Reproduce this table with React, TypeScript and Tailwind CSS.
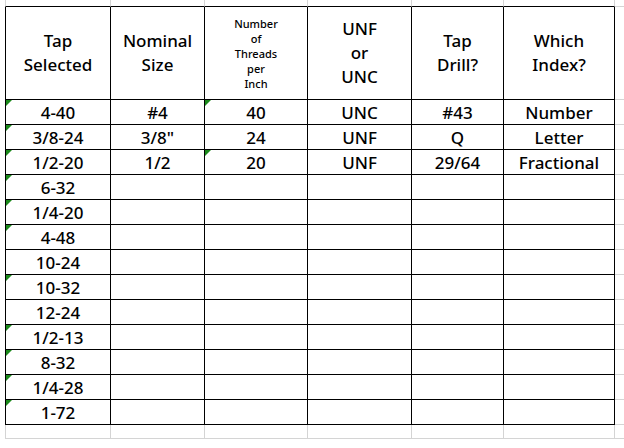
const rows: [string, string, string, string, string, string, boolean, boolean][] = [
  ["4-40", "#4", "40", "UNC", "#43", "Number", true, true],
  ["3/8-24", "3/8\"", "24", "UNF", "Q", "Letter", true, false],
  ["1/2-20", "1/2", "20", "UNF", "29/64", "Fractional", true, true],
  ["6-32", "", "", "", "", "", true, false],
  ["1/4-20", "", "", "", "", "", true, false],
  ["4-48", "", "", "", "", "", true, false],
  ["10-24", "", "", "", "", "", false, false],
  ["10-32", "", "", "", "", "", true, false],
  ["12-24", "", "", "", "", "", false, false],
  ["1/2-13", "", "", "", "", "", true, false],
  ["8-32", "", "", "", "", "", true, false],
  ["1/4-28", "", "", "", "", "", true, false],
  ["1-72", "", "", "", "", "", true, false],
];

function Flag() {
  return (
    <svg className="absolute left-0 top-0" width="6" height="6" viewBox="0 0 6 6">
      <polygon points="0,0 6,0 0,6" fill="#1b8a1b" />
    </svg>
  );
}

function Cell({ text, first, flag }: { text: string; first?: boolean; flag?: boolean }) {
  return (
    <div
      className={
        "relative flex items-center justify-center border-r border-b border-black text-[17px] leading-none " +
        (first ? "border-l" : "")
      }
    >
      {flag && <Flag />}
      {text}
    </div>
  );
}

function Head({ lines, first, small }: { lines: string[]; first?: boolean; small?: boolean }) {
  return (
    <div
      className={
        "flex flex-col items-center justify-center border-r border-b border-black text-center " +
        (first ? "border-l " : "") +
        (small ? "text-[11px] leading-[15px]" : "text-[17px] leading-[24px]")
      }
    >
      {lines.map((l) => (
        <span key={l}>{l}</span>
      ))}
    </div>
  );
}

export default function App() {
  const blanks = [0, 1, 2, 3, 4, 5];
  return (
    <div className="h-[448px] w-[624px] overflow-hidden bg-white font-medium text-black" style={{ fontFamily: '"Noto Sans", "Open Sans", sans-serif' }}>
      <div className="ml-[5px] grid grid-cols-[106px_94px_103px_104px_92px_111px_10px] grid-rows-[7px_93px_repeat(13,25px)_14px]">
        {blanks.map((i) => (
          <div key={"t" + i} className={"border-r border-b border-r-[#d4d4d4] border-b-black " + (i === 0 ? "border-l border-l-[#d4d4d4]" : "")} />
        ))}
        <div className="border-b border-[#d4d4d4]" />

        <Head lines={["Tap", "Selected"]} first />
        <Head lines={["Nominal", "Size"]} />
        <Head lines={["Number", "of", "Threads", "per", "Inch"]} small />
        <Head lines={["UNF", "or", "UNC"]} />
        <Head lines={["Tap", "Drill?"]} />
        <Head lines={["Which", "Index?"]} />
        <div className="border-b border-[#d4d4d4]" />

        {rows.map((r) => (
          <div key={r[0]} className="contents">
            <Cell text={r[0]} first flag={r[6]} />
            <Cell text={r[1]} />
            <Cell text={r[2]} flag={r[7]} />
            <Cell text={r[3]} />
            <Cell text={r[4]} />
            <Cell text={r[5]} />
            <div className="border-b border-[#d4d4d4]" />
          </div>
        ))}

        {blanks.map((i) => (
          <div key={"b" + i} className={"border-r border-b border-[#d4d4d4] " + (i === 0 ? "border-l" : "")} />
        ))}
        <div className="border-b border-[#d4d4d4]" />
      </div>
    </div>
  );
}
